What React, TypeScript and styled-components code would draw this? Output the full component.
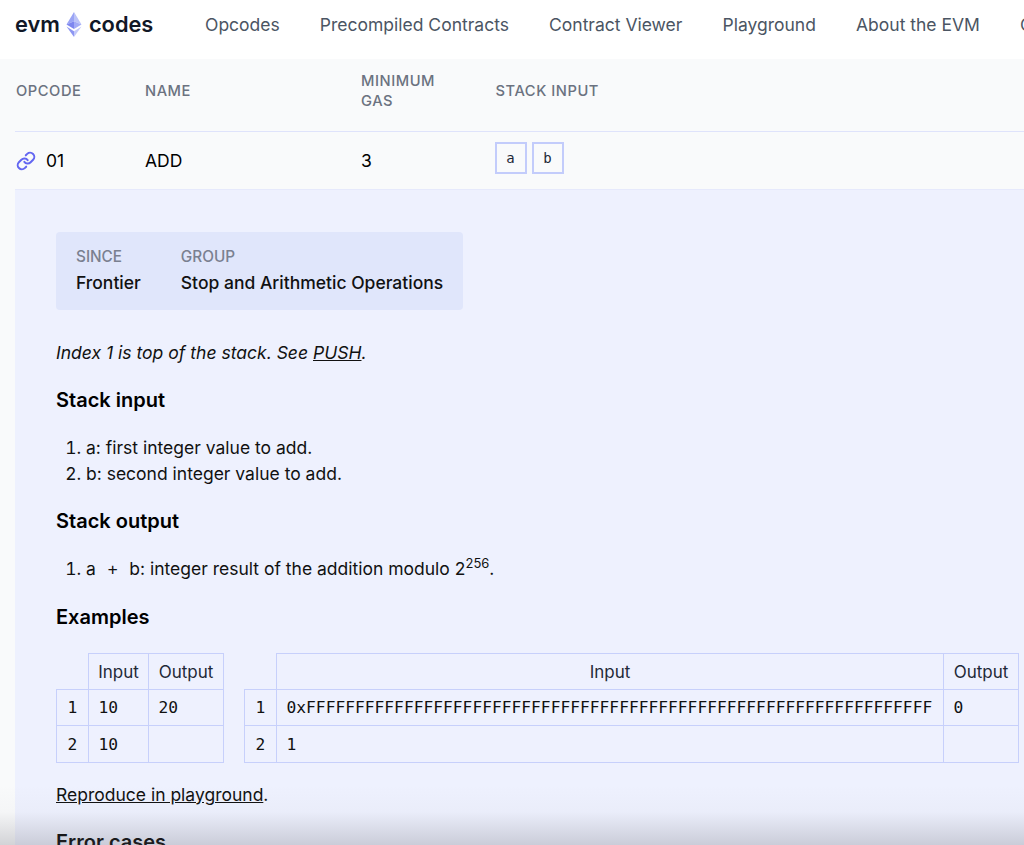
import React from "react";
import styled, { createGlobalStyle } from "styled-components";

const Global = createGlobalStyle`
  html, body { margin: 0; padding: 0; height: 845px; overflow: hidden; background: #f9fafb; }
  body { font-family: Inter, "Liberation Sans", sans-serif; color: #000; }
  * { box-sizing: border-box; }
`;

const Page = styled.div`
  position: relative;
  width: 1024px;
  height: 845px;
  overflow: hidden;
`;

const Nav = styled.header`
  height: 59px;
  background: #fff;
  display: flex;
  align-items: center;
  padding: 0 0 11px 15px;
  white-space: nowrap;
`;

const Logo = styled.div`
  display: flex;
  align-items: center;
  font-size: 21.8px;
  font-weight: 600;
  color: #111827;
  width: 190px;
  flex: none;
`;

const LogoMark = styled.svg`
  width: 16px;
  height: 25px;
  margin: 0 7px 0 6px;
`;

const NavLinks = styled.nav`
  display: flex;
  gap: 40.1px;
`;

const NavLink = styled.a`
  font-size: 17.5px;
  color: #4b5563;
`;

const Head = styled.div`
  display: grid;
  grid-template-columns: 130px 216px 134.5px 1fr;
  align-items: center;
  height: 73px;
  padding-bottom: 9px;
  margin-left: 15px;
  border-bottom: 1px solid #dfe3fb;
  font-size: 14.7px;
  font-weight: 500;
  line-height: 20px;
  letter-spacing: 0.55px;
  color: #6b7280;
`;

const HeadCell = styled.div<{ $first?: boolean }>`
  padding-left: ${(p) => (p.$first ? "1px" : "0")};
`;

const Row = styled.div`
  display: grid;
  grid-template-columns: 130px 216px 134.5px 1fr;
  align-items: center;
  height: 58px;
  margin-left: 15px;
  font-size: 17.5px;
  color: #000;
  border-bottom: 1px solid #e6e9fc;
`;

const OpcodeCell = styled.div`
  display: flex;
  align-items: center;
  gap: 10px;
  padding-left: 1px;
`;

const Chips = styled.div`
  display: flex;
  gap: 5px;
  margin: 0 0 6px -1px;
`;

const Chip = styled.span`
  width: 32px;
  height: 32px;
  display: flex;
  align-items: center;
  justify-content: center;
  border: 2px solid #c3ccfb;
  background: #f9fafb;
  font-family: "DejaVu Sans Mono", monospace;
  font-size: 14px;
  color: #1f2937;
`;

const Panel = styled.section`
  margin-left: 15px;
  background: #eef1fe;
  padding: 42px 0 0 41px;
  height: 660px;
  color: #000;
`;

const InfoCard = styled.div`
  display: inline-flex;
  gap: 40px;
  height: 78px;
  width: 407px;
  padding: 15px 20px 0;
  background: #e0e6fb;
  border-radius: 4px;
`;

const InfoItem = styled.div`
  display: flex;
  flex-direction: column;
  gap: 4px;
`;

const InfoLabel = styled.div`
  font-size: 15.3px;
  font-weight: 500;
  line-height: 20px;
  color: #7a8090;
`;

const InfoValue = styled.div`
  font-size: 17.5px;
  line-height: 24px;
  font-weight: 500;
  color: #111;
  white-space: nowrap;
`;

const Note = styled.p`
  margin: 29px 0 0;
  font-size: 17.55px;
  line-height: 28px;
  font-style: italic;
  color: #111;
`;

const Link = styled.a`
  text-decoration: underline;
  color: inherit;
`;

const Heading = styled.h3<{ $top: number }>`
  margin: ${(p) => p.$top}px 0 0;
  font-size: 20px;
  line-height: 28px;
  font-weight: 600;
  color: #000;
`;

const List = styled.ol`
  margin: 21px 0 0;
  padding: 0 0 0 30px;
  font-size: 17.5px;
  line-height: 26px;
  color: #111;
`;

const InlineMono = styled.code`
  font-family: "DejaVu Sans Mono", monospace;
  font-size: 16.3px;
  white-space: pre;
  padding: 0 2px;
`;

const Sup = styled.sup`
  font-size: 13px;
  line-height: 0;
`;

const Tables = styled.div`
  display: flex;
  gap: 20px;
  margin: 22px 0 0;
  align-items: flex-start;
`;

const Table = styled.table`
  border-collapse: collapse;
`;

const Th = styled.th<{ $w?: number; $blank?: boolean }>`
  height: 36px;
  width: ${(p) => (p.$w ? `${p.$w}px` : "auto")};
  padding: 0 8px;
  font-weight: 400;
  font-size: 17px;
  color: #1f2937;
  text-align: center;
  border: ${(p) => (p.$blank ? "0" : "1px solid #c7d0fb")};
`;

const Td = styled.td<{ $index?: boolean }>`
  height: 36.4px;
  padding: 0 ${(p) => (p.$index ? "10px" : "9.5px")};
  border: 1px solid #c7d0fb;
  font-family: "DejaVu Sans Mono", monospace;
  font-size: 16.25px;
  color: #111;
  text-align: ${(p) => (p.$index ? "center" : "left")};
`;

const Closing = styled.p`
  margin: 18px 0 0;
  font-size: 17.5px;
  line-height: 28px;
  color: #111;
`;

const BottomFade = styled.div`
  position: absolute;
  left: 0;
  right: 0;
  bottom: 0;
  height: 60px;
  background: linear-gradient(to bottom, rgba(110, 110, 120, 0), rgba(110, 110, 120, 0.03) 45%, rgba(110, 110, 120, 0.28));
  pointer-events: none;
`;

const EthLogo = () => (
  <LogoMark viewBox="0 0 16 25" aria-hidden="true">
    <path d="M8 0 L0.5 12.6 L8 9.2 Z" fill="#9aa4f5" />
    <path d="M8 0 L15.5 12.6 L8 9.2 Z" fill="#bcc3f8" />
    <path d="M0.5 12.6 L8 17 L8 9.2 Z" fill="#7d86ef" />
    <path d="M15.5 12.6 L8 17 L8 9.2 Z" fill="#a3abf6" />
    <path d="M0.5 14.6 L8 25 L8 19.2 Z" fill="#8d96f2" />
    <path d="M15.5 14.6 L8 25 L8 19.2 Z" fill="#c3c9fa" />
  </LogoMark>
);

const LinkIcon = () => (
  <svg width="20" height="20" viewBox="0 0 24 24" fill="none" stroke="#6366f1" strokeWidth="2.4" strokeLinecap="round" strokeLinejoin="round" aria-hidden="true">
    <path d="M10 13a5 5 0 0 0 7.54.54l3-3a5 5 0 0 0-7.07-7.07l-1.72 1.71" />
    <path d="M14 11a5 5 0 0 0-7.54-.54l-3 3a5 5 0 0 0 7.07 7.07l1.71-1.71" />
  </svg>
);

const hex = "0x" + "F".repeat(64);

export default function App() {
  return (
    <Page>
      <Global />
      <Nav>
        <Logo>
          evm
          <EthLogo />
          codes
        </Logo>
        <NavLinks>
          <NavLink>Opcodes</NavLink>
          <NavLink>Precompiled Contracts</NavLink>
          <NavLink>Contract Viewer</NavLink>
          <NavLink>Playground</NavLink>
          <NavLink>About the EVM</NavLink>
          <NavLink>Contributing</NavLink>
        </NavLinks>
      </Nav>
      <Head>
        <HeadCell $first>OPCODE</HeadCell>
        <HeadCell>NAME</HeadCell>
        <HeadCell>
          MINIMUM
          <br />
          GAS
        </HeadCell>
        <HeadCell>STACK INPUT</HeadCell>
      </Head>
      <Row>
        <OpcodeCell>
          <LinkIcon />
          01
        </OpcodeCell>
        <div>ADD</div>
        <div>3</div>
        <Chips>
          <Chip>a</Chip>
          <Chip>b</Chip>
        </Chips>
      </Row>
      <Panel>
        <InfoCard>
          <InfoItem>
            <InfoLabel>SINCE</InfoLabel>
            <InfoValue>Frontier</InfoValue>
          </InfoItem>
          <InfoItem>
            <InfoLabel>GROUP</InfoLabel>
            <InfoValue>Stop and Arithmetic Operations</InfoValue>
          </InfoItem>
        </InfoCard>
        <Note>
          Index 1 is top of the stack. See <Link>PUSH</Link>.
        </Note>
        <Heading $top={19}>Stack input</Heading>
        <List>
          <li>a: first integer value to add.</li>
          <li>b: second integer value to add.</li>
        </List>
        <Heading $top={20}>Stack output</Heading>
        <List>
          <li>
            a<InlineMono> + </InlineMono>b: integer result of the addition modulo 2<Sup>256</Sup>.
          </li>
        </List>
        <Heading $top={20}>Examples</Heading>
        <Tables>
          <Table>
            <thead>
              <tr>
                <Th $blank $w={32} />
                <Th $w={60}>Input</Th>
                <Th $w={75}>Output</Th>
              </tr>
            </thead>
            <tbody>
              <tr>
                <Td $index>1</Td>
                <Td>10</Td>
                <Td>20</Td>
              </tr>
              <tr>
                <Td $index>2</Td>
                <Td>10</Td>
                <Td />
              </tr>
            </tbody>
          </Table>
          <Table>
            <thead>
              <tr>
                <Th $blank $w={32} />
                <Th $w={667}>Input</Th>
                <Th $w={75}>Output</Th>
              </tr>
            </thead>
            <tbody>
              <tr>
                <Td $index>1</Td>
                <Td>{hex}</Td>
                <Td>0</Td>
              </tr>
              <tr>
                <Td $index>2</Td>
                <Td>1</Td>
                <Td />
              </tr>
            </tbody>
          </Table>
        </Tables>
        <Closing>
          <Link>Reproduce in playground</Link>.
        </Closing>
        <Heading $top={19}>Error cases</Heading>
      </Panel>
      <BottomFade />
    </Page>
  );
}
